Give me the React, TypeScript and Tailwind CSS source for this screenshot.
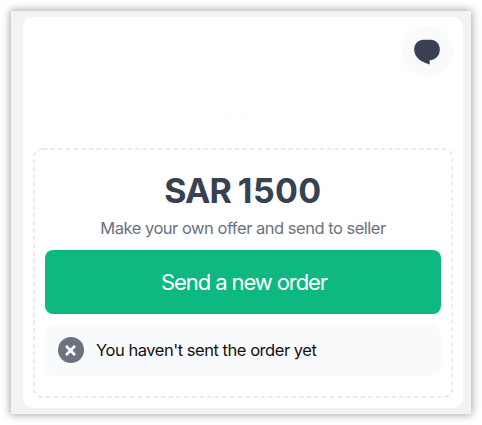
import { FaTimes } from "react-icons/fa";

const ChatBubble = () => (
  <svg viewBox="0 0 26 26" className="mr-px h-[26px] w-[26px]" fill="#374151">
    <path d="M9.5 0.800h7.200c5 0 9.100 3.900 9.100 9.600 0 6.200-4.100 10.400-10.100 10.800v4.300C7.800 23 0.200 18.800 0.200 10.400 0.200 4.700 4.500 0.800 9.500 0.800z" />
  </svg>
);

// dashed outline around the offer box
const DashedOutline = () => (
  <svg className="pointer-events-none absolute inset-0 h-full w-full" fill="none">
    <rect
      x="0.900"
      y="0.900"
      width="418.500"
      height="248.200"
      rx="9"
      stroke="#e5e5e6"
      strokeWidth="1.500"
      strokeDasharray="4.300 3.380"
    />
  </svg>
);

export default function App() {
  return (
    <div className="h-[425px] w-[482px] bg-white p-[11px] font-['Inter','Liberation_Sans',sans-serif]">
      <div className="h-[403px] w-[460px] bg-[#f1f3f5] pt-[5.5px] pl-3 shadow-[0_0_8px_1px_rgba(0,0,0,0.35)]">
        <div className="h-[391px] w-[440px] rounded-[10px] bg-white px-[10px]">
          <div className="relative flex h-[131.5px] justify-end pt-[9.5px]">
            <button className="flex h-[51px] w-[51px] items-center justify-center rounded-full bg-[#f9fafb]">
              <ChatBubble />
            </button>
            <div className="absolute top-[98.5px] left-[197px] flex gap-3">
              <span className="h-px w-[2px] bg-[#f0f0f0]" />
              <span className="h-px w-[2px] bg-[#ececec]" />
            </div>
          </div>

          <div className="relative flex h-[250px] w-[420px] flex-col px-3 pt-[24px]">
            <DashedOutline />
            <h1 className="h-[40px] text-center text-[34px] leading-[38px] font-bold tracking-[0.4px] whitespace-nowrap text-[#374151]">
              <span className="tracking-[-1px]">SAR </span>1500
            </h1>
            <p className="mt-[6px] h-[20px] text-center text-[16.5px] leading-[21px] tracking-[-0.49px] whitespace-nowrap text-[#6b7280]">
              Make your own offer and send to seller
            </p>
            <button className="mt-[12px] h-[64px] w-[396px] shrink-0 rounded-[8px] bg-[#0eb981] pt-px pl-[2px] text-[22px] tracking-[-1.1px] text-white">
              Send a new order
            </button>
            <div className="mt-[10.5px] flex h-[51px] w-[396px] shrink-0 items-center rounded-[10px] bg-[#f9fafb] pl-[12.5px]">
              <span className="flex h-[26px] w-[26px] items-center justify-center rounded-full bg-[#6b7280]">
                <FaTimes className="h-[15px] w-[15px] text-white" />
              </span>
              <span className="ml-[12.5px] pt-px text-[16.5px] tracking-[-0.46px] whitespace-nowrap text-[#111]">
                You haven't sent the order yet
              </span>
            </div>
          </div>
        </div>
      </div>
    </div>
  );
}
